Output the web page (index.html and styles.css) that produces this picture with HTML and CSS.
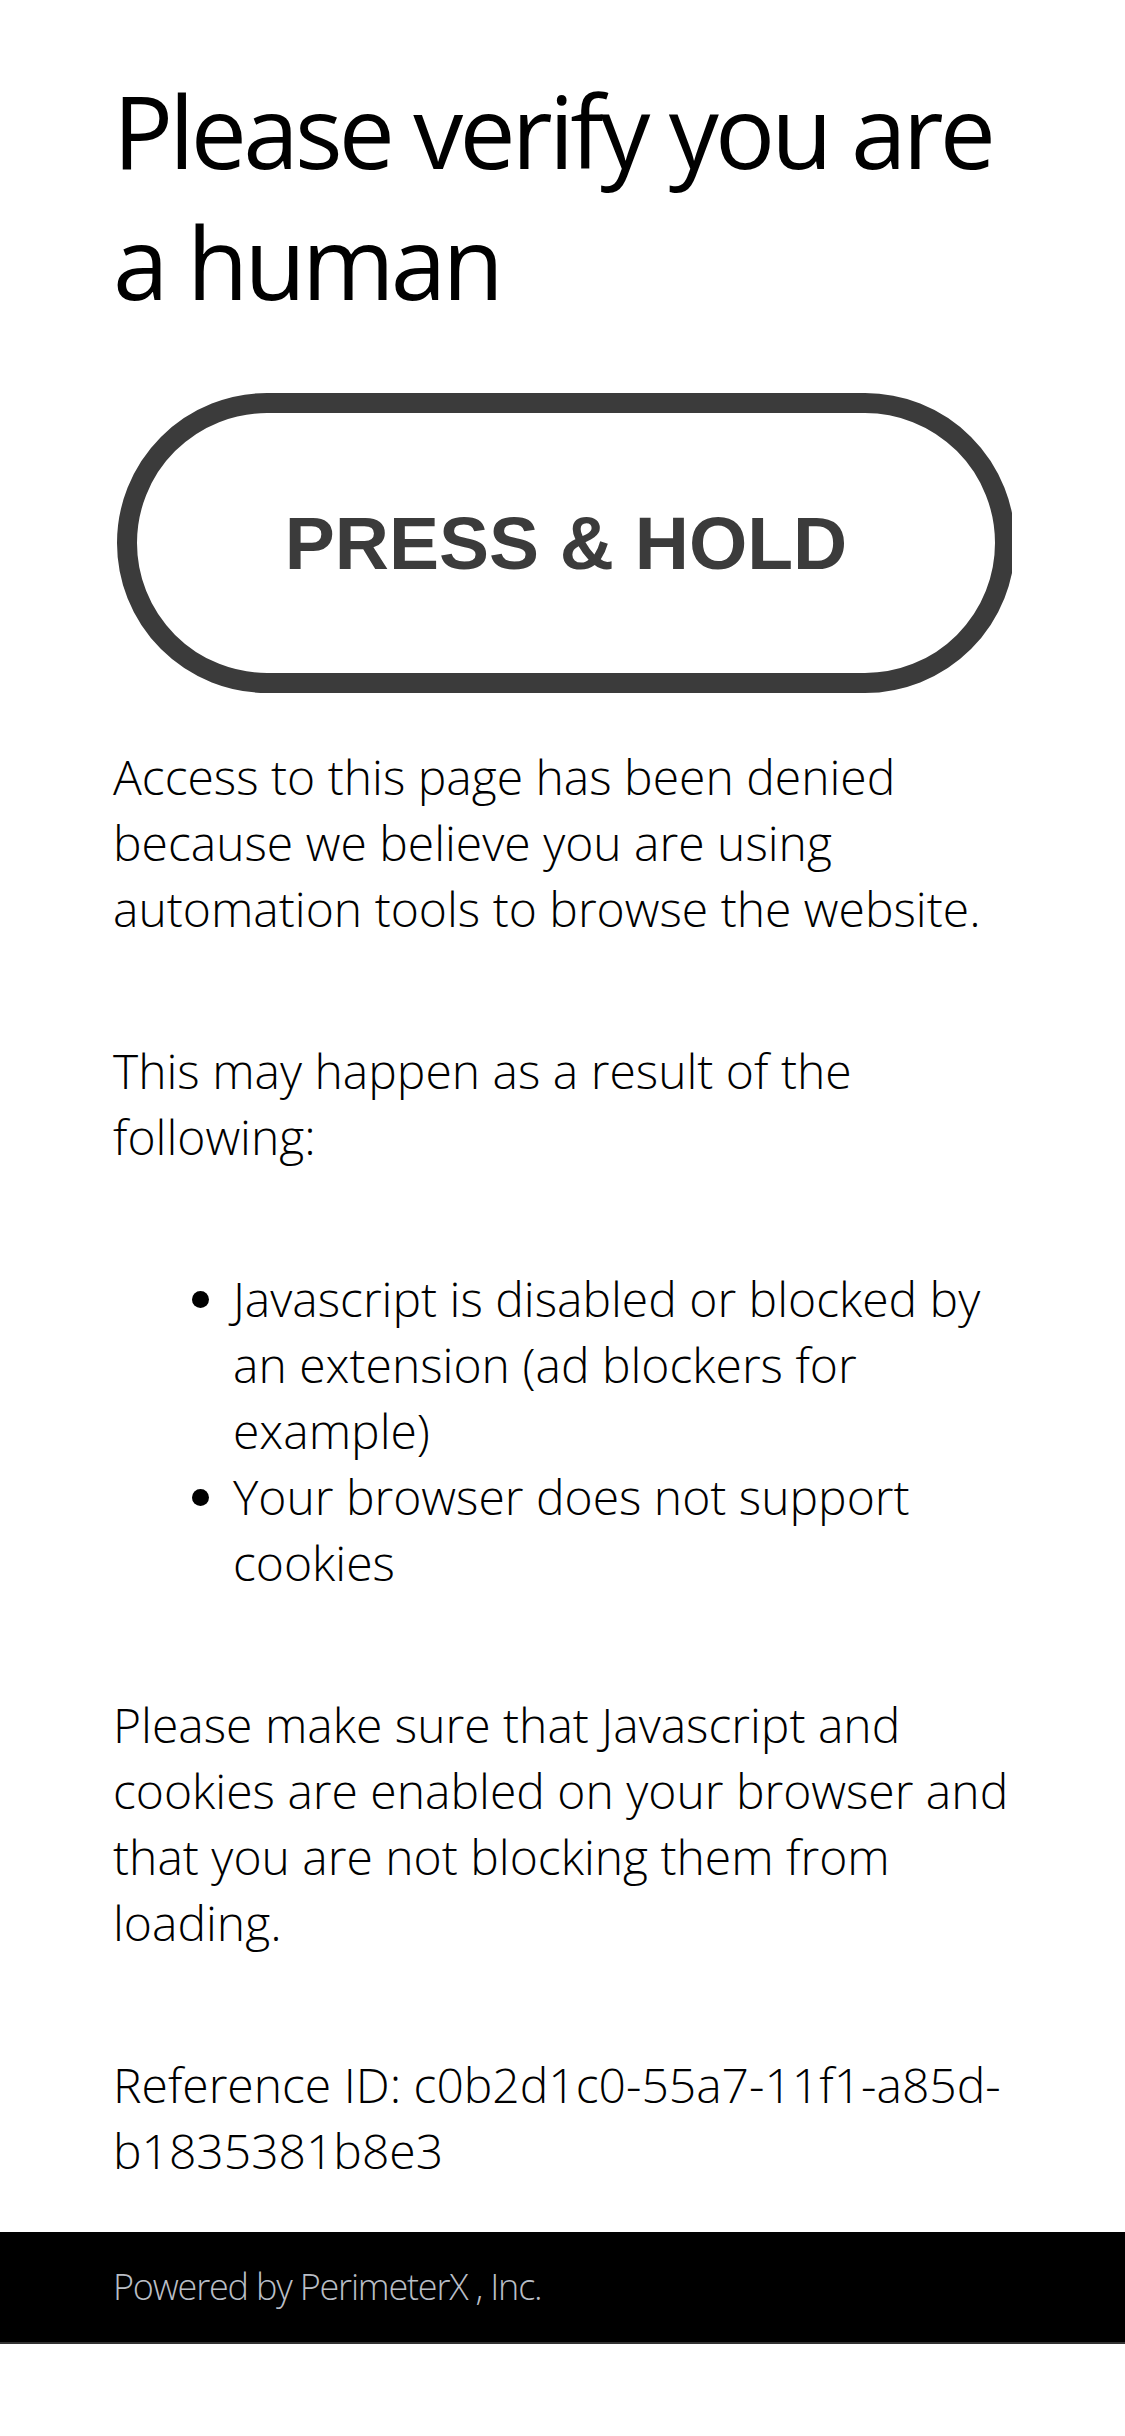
FILE: index.html
```html
<!DOCTYPE html>
<html lang="en">
<head>
<meta charset="utf-8">
<title>Access to this page has been denied</title>
<link rel="stylesheet" href="styles.css">
</head>
<body>
<main class="content">
  <h1 class="title">Please verify you are a human</h1>
  <div class="captcha">
    <div class="hold-btn">PRESS &amp; HOLD</div>
  </div>
  <p class="block">Access to this page has been denied because we believe you are using automation tools to browse the website.</p>
  <p class="block">This may happen as a result of the following:</p>
  <ul class="block reasons">
    <li>Javascript is disabled or blocked by an extension (ad blockers for example)</li>
    <li>Your browser does not support cookies</li>
  </ul>
  <p class="block">Please make sure that Javascript and cookies are enabled on your browser and that you are not blocking them from loading.</p>
  <p class="block">Reference ID: c0b2d1c0-55a7-11f1-a85d-b1835381b8e3</p>
</main>
<footer class="footer">
  <span class="footer-text">Powered by <span class="brand">PerimeterX</span> , Inc.</span>
</footer>
</body>
</html>
```
FILE: styles.css
```css
html, body {
  margin: 0;
  padding: 0;
  background: #fff;
}
body {
  font-family: "Open Sans", "Liberation Sans", sans-serif;
  color: #000;
}
.content {
  padding: 65px 113px 47.5px;
}
.title {
  margin: 0;
  font-size: 100px;
  font-weight: 400;
  letter-spacing: -3.8px;
  line-height: 131px;
}
.captcha {
  margin-top: 66px;
  width: 899px;
  height: 300px;
  overflow: hidden;
}
.hold-btn {
  box-sizing: border-box;
  margin-left: 4px;
  width: 898px;
  height: 300px;
  border: 20px solid #3b3b3b;
  border-radius: 150px;
  display: flex;
  align-items: center;
  justify-content: center;
  font-family: "Liberation Sans", Arial, sans-serif;
  font-weight: 700;
  font-size: 75px;
  color: #3b3b3b;
}
.block {
  margin: 96px 0 0;
  font-size: 48px;
  font-weight: 300;
  line-height: 66px;
}
.captcha + .block {
  margin-top: 51px;
}
.reasons {
  padding-left: 120px;
}
.footer {
  box-sizing: border-box;
  height: 112px;
  background: #000;
  border-bottom: 2px solid #333;
  padding: 0 113px;
  display: flex;
  align-items: center;
}
.footer-text {
  font-size: 36px;
  font-weight: 300;
  letter-spacing: -1.2px;
  color: #b9bec6;
}
```
